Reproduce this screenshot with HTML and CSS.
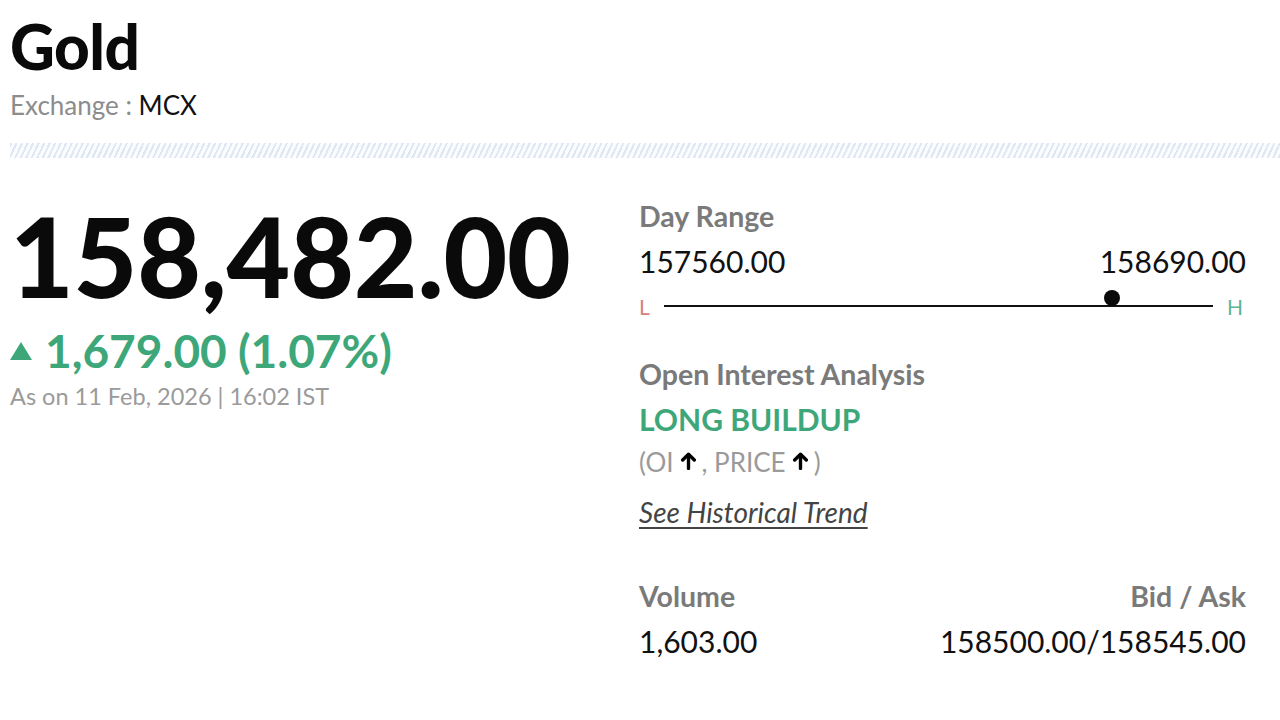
FILE: index.html
```html
<!DOCTYPE html>
<html>
<head>
<meta charset="utf-8">
<link rel="stylesheet" href="styles.css">
</head>
<body>
<div class="page">
  <header class="head">
    <h1 class="title">Gold</h1>
    <div class="exchange"><span class="ex-label">Exchange : </span><span class="ex-val">MCX</span></div>
  </header>
  <div class="stripe"></div>
  <main class="main">
    <section class="left">
      <div class="price">158,482.00</div>
      <div class="change"><span class="tri"></span>1,679.00 (1.07%)</div>
      <div class="asof">As on 11 Feb, 2026 | 16:02 IST</div>
    </section>
    <section class="right">
      <div class="label">Day Range</div>
      <div class="range-vals"><span>157560.00</span><span>158690.00</span></div>
      <div class="slider">
        <span class="lo">L</span>
        <div class="track"><span class="dot" style="left: 81.6%"></span></div>
        <span class="hi">H</span>
      </div>
      <div class="label oi-label">Open Interest Analysis</div>
      <div class="buildup">LONG BUILDUP</div>
      <div class="oi-note">(OI<svg class="arrow" viewBox="0 0 16 18"><path d="M8 16.5V3M2.5 8.5L8 3l5.5 5.5" fill="none" stroke="#000" stroke-width="3.2" stroke-linecap="round" stroke-linejoin="round"/></svg>, PRICE<svg class="arrow" viewBox="0 0 16 18"><path d="M8 16.5V3M2.5 8.5L8 3l5.5 5.5" fill="none" stroke="#000" stroke-width="3.2" stroke-linecap="round" stroke-linejoin="round"/></svg>)</div>
      <a class="trend" href="#">See Historical Trend</a>
      <div class="stats">
        <div class="stat">
          <div class="label">Volume</div>
          <div class="val">1,603.00</div>
        </div>
        <div class="stat stat-r">
          <div class="label">Bid / Ask</div>
          <div class="val">158500.00/158545.00</div>
        </div>
      </div>
    </section>
  </main>
</div>
</body>
</html>
```
FILE: styles.css
```css
* { box-sizing: border-box; }
html, body { margin: 0; padding: 0; background: #fff; }
body { font-family: Lato, "Open Sans", Arial, sans-serif; color: #111; }
.page { padding: 14px 0 0 10px; }
.title { margin: 0; font-size: 62px; font-weight: 900; line-height: 64px; color: #0a0a0a; letter-spacing: -0.5px; }
.exchange { font-size: 26px; line-height: 30px; margin-top: 12px; }
.ex-label { color: #8c8c8c; }
.ex-val { color: #111; }
.stripe {
  margin-top: 23px; height: 15px;
  background: repeating-linear-gradient(115deg, #dfe8f2 0 2px, #fbfcfe 2px 5px);
}
.main { display: flex; padding-top: 36px; }
.left { width: 629px; }
.price { font-size: 110px; font-weight: 900; line-height: 110px; letter-spacing: -0.2px; color: #0a0a0a; margin-top: 6px; }
.change { display: flex; align-items: center; color: #3ea77a; font-size: 46px; font-weight: 700; line-height: 52px; margin-top: 15px; }
.tri { width: 0; height: 0; border-left: 11px solid transparent; border-right: 11px solid transparent; border-bottom: 18px solid #3ea77a; margin-right: 13px; }
.asof { color: #9a9a9a; font-size: 23.5px; line-height: 28px; margin-top: 5px; }
.right { width: 607px; }
.label { color: #7a7a7a; font-size: 28.5px; font-weight: 700; line-height: 44px; }
.range-vals { display: flex; justify-content: space-between; font-size: 30px; line-height: 46px; color: #111; }
.slider { display: flex; align-items: center; height: 40px; }
.lo, .hi { font-size: 21px; line-height: 24px; margin-top: 5px; }
.lo { color: #d98080; width: 25px; }
.hi { color: #5db596; width: 33px; text-align: right; padding-right: 3px; }
.track { position: relative; flex: 1; height: 2px; background: #111; margin-top: 3px; }
.dot { position: absolute; bottom: 1px; width: 16px; height: 16px; margin-left: -8px; border-radius: 50%; background: #0a0a0a; }
.oi-label { margin-top: 28px; }
.buildup { color: #3ea77a; font-size: 30px; font-weight: 700; line-height: 46px; }
.oi-note { display: flex; align-items: center; color: #9a9a9a; font-size: 26px; line-height: 40px; }
.arrow { width: 17px; height: 19px; margin: 0 5px 3px 6px; }
.trend { display: inline-block; color: #444; font-size: 28px; font-style: italic; line-height: 40px; margin-top: 10px; text-decoration: underline; text-underline-offset: 4px; }
.stats { display: flex; justify-content: space-between; margin-top: 42px; }
.stat-r { text-align: right; }
.val { font-size: 30px; line-height: 46px; color: #111; }
```
